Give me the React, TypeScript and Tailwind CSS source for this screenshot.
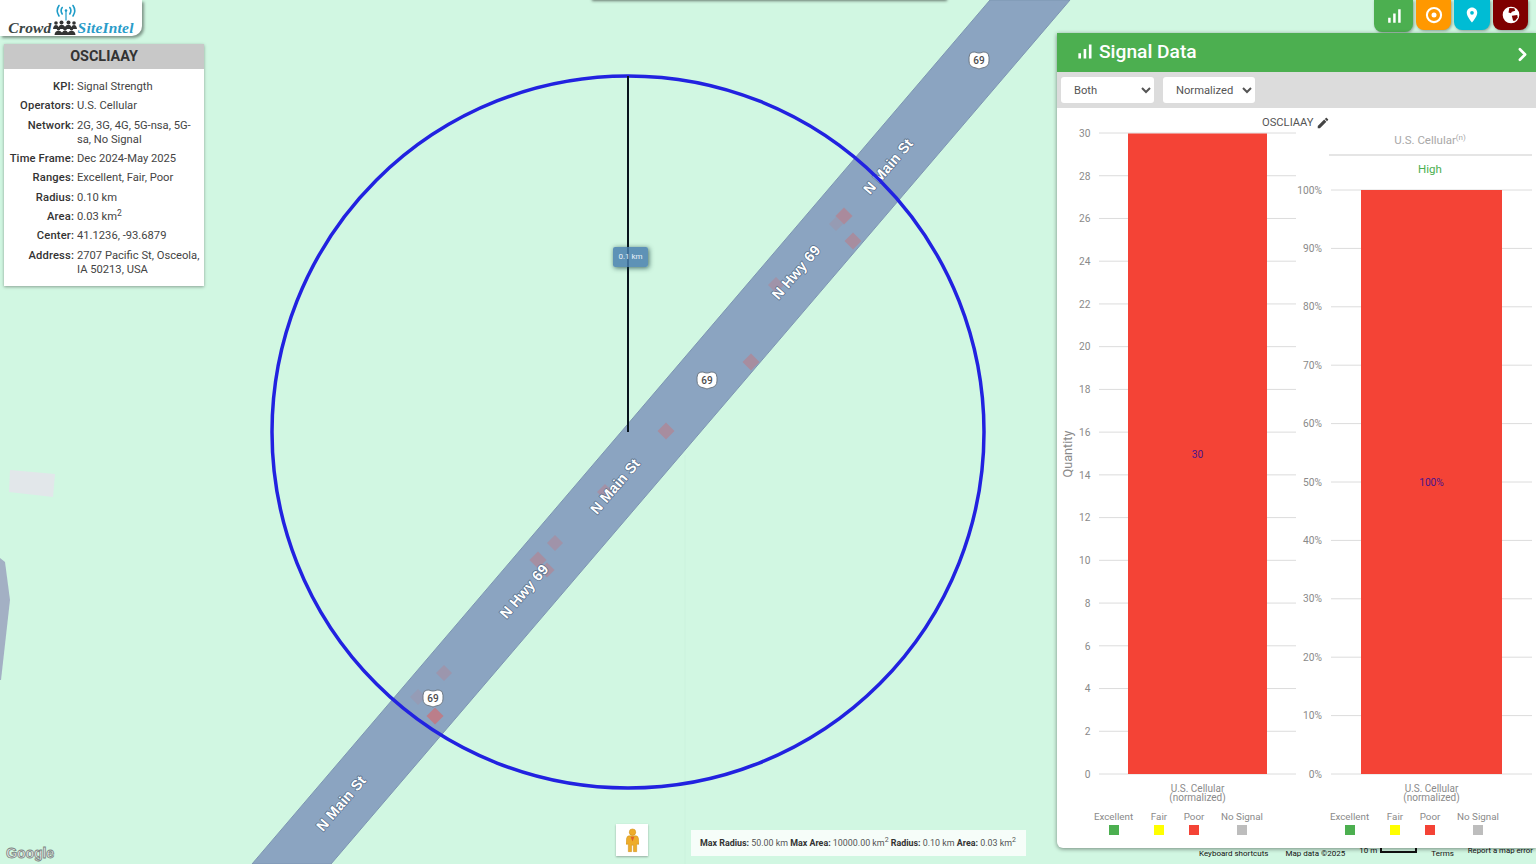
import React from "react";
import { ChevronRight } from "lucide-react";

const FONT = "font-['Roboto',sans-serif]";

const infoRows: [string, React.ReactNode][] = [
  ["KPI:", "Signal Strength"],
  ["Operators:", "U.S. Cellular"],
  ["Network:", "2G, 3G, 4G, 5G-nsa, 5G-sa, No Signal"],
  ["Time Frame:", "Dec 2024-May 2025"],
  ["Ranges:", "Excellent, Fair, Poor"],
  ["Radius:", "0.10 km"],
  ["Area:", <span key="a" className="inline-block h-[14px]">0.03 km<sup className="text-[8.5px]">2</sup></span>],
  ["Center:", "41.1236, -93.6879"],
  ["Address:", "2707 Pacific St, Osceola, IA 50213, USA"],
];

const diamonds: [number, number, number, number][] = [
  [666, 431, 8.5, 0.55],
  [751, 362, 8.5, 0.55],
  [776, 285, 8, 0.4],
  [844, 216, 8.5, 0.6],
  [836, 224, 7, 0.22],
  [853, 241, 8.5, 0.55],
  [605, 492, 8, 0.45],
  [555, 543, 8, 0.4],
  [538, 560, 8.5, 0.5],
  [547, 570, 7.5, 0.5],
  [444, 673, 8, 0.32],
  [418, 697, 8, 0.18],
  [435, 716, 8.5, 0.9],
];

const roadLabels: [string, number, number][] = [
  ["N Main St", 342, 804],
  ["N Hwy 69", 525, 592],
  ["N Main St", 616, 487],
  ["N Hwy 69", 797, 273],
  ["N Main St", 889, 167],
];

function Shield({ x, y }: { x: number; y: number }) {
  return (
    <g transform={`translate(${x} ${y})`}>
      <path
        d="M-9 -6.5 Q-6 -8.5 -4 -8 Q-2 -7 0 -7 Q2 -7 4 -8 Q6 -8.5 9 -6.5 Q10.5 -3 10 1 Q10 7 3 8 Q1 8.5 0 9 Q-1 8.5 -3 8 Q-10 7 -10 1 Q-10.5 -3 -9 -6.5 Z"
        fill="#fff"
        stroke="#6f7a86"
        strokeWidth="1"
      />
      <text x="0" y="3.5" textAnchor="middle" fontSize="10" fontWeight="500" fill="#4d4d4d">
        69
      </text>
    </g>
  );
}

function MapDrawing() {
  return (
    <svg className={`absolute inset-0 ${FONT}`} width="1536" height="864" viewBox="0 0 1536 864">
      <polygon points="990,0 1070,0 331,864 252,864" fill="#8ba4c1" stroke="#7d96b2" strokeWidth="1" />
      <polygon points="10,470 55,474 53,497 9,492" fill="#e2e7ea" />
      <polygon points="0,558 5,562 10,600 1,680 0,680" fill="#a3b0c4" />
      <line x1="685" y1="455" x2="685" y2="864" stroke="#cbf2dd" strokeWidth="1" />
      {diamonds.map(([x, y, r, o], i) => (
        <polygon
          key={i}
          points={`${x},${y - r} ${x + r},${y} ${x},${y + r} ${x - r},${y}`}
          fill="#c07a84"
          opacity={o}
        />
      ))}
      {roadLabels.map(([t, x, y], i) => (
        <text
          key={i}
          x={x}
          y={y}
          transform={`rotate(-49.5 ${x} ${y})`}
          textAnchor="middle"
          dominantBaseline="middle"
          fontFamily="Liberation Sans, sans-serif"
          fontSize="14.5"
          fontWeight="700"
          fill="#fff"
          stroke="#566d88"
          strokeWidth="1.4"
          paintOrder="stroke"
          letterSpacing="0.15"
        >
          {t}
        </text>
      ))}
      <Shield x={979} y={60} />
      <Shield x={707} y={380} />
      <Shield x={433} y={698} />
      <circle cx="628" cy="432" r="356" fill="none" stroke="#2222e0" strokeWidth="3.5" />
      <line x1="628" y1="76" x2="628" y2="432" stroke="#06131c" strokeWidth="2" />
    </svg>
  );
}

function CrowdIcon() {
  return (
    <svg width="26" height="15" viewBox="0 0 26 15" fill="#333" className="mb-[1px] shrink-0">
      <circle cx="4" cy="3" r="1.8" /><circle cx="9.5" cy="2.4" r="2" /><circle cx="16.5" cy="2.4" r="2" /><circle cx="22" cy="3" r="1.8" />
      <path d="M1 9 Q1.5 5 4 5 Q6 5 6.5 7 Q7.5 4.8 9.5 4.8 Q12 4.8 13 7 Q14 4.8 16.5 4.8 Q18.5 4.8 19.5 7 Q20 5 22 5 Q24.5 5 25 9 Z" />
      <circle cx="6.5" cy="8.8" r="1.8" /><circle cx="13" cy="8.4" r="2" /><circle cx="19.5" cy="8.8" r="1.8" />
      <path d="M2.5 15 Q3 10.8 6.5 10.8 Q9 10.8 10 12.5 Q11 10.6 13 10.6 Q15 10.6 16 12.5 Q17 10.8 19.5 10.8 Q23 10.8 23.5 15 Z" />
    </svg>
  );
}

function Logo() {
  return (
    <div className="absolute left-0 top-0 flex h-[36px] w-[142px] flex-col items-center rounded-br-[10px] bg-white shadow-[2px_2px_3px_rgba(0,0,0,0.4)]">
      <svg className="mr-[10px] mt-[4px]" width="24" height="17" viewBox="0 0 24 17" fill="none" stroke="#1e9cc8" strokeWidth="1.6" strokeLinecap="round">
        <path d="M5 1.5 Q1.5 6.5 5 12" />
        <path d="M8.2 3.5 Q6 6.5 8.2 10" />
        <path d="M19 1.5 Q22.5 6.5 19 12" />
        <path d="M15.8 3.5 Q18 6.5 15.8 10" />
        <circle cx="12" cy="6.5" r="1.3" fill="#1e9cc8" stroke="none" />
        <path d="M12 7 L12 16" strokeWidth="1.2" />
      </svg>
      <div className="-mt-[2px] flex items-end whitespace-nowrap font-['Liberation_Serif',serif] text-[15.5px] font-bold italic leading-[17px]">
        <span className="tracking-[0.2px] text-[#3a4444]">Crowd</span>
        <CrowdIcon />
        <span className="tracking-[0.2px] text-[#2a9cc9]">SiteIntel</span>
      </div>
    </div>
  );
}

function InfoPanel() {
  return (
    <div className={`absolute left-[4px] top-[44px] w-[200px] bg-white shadow-[0_1px_3px_rgba(0,0,0,0.35)] ${FONT}`}>
      <div className="flex h-[25px] items-center justify-center bg-[#c8c8c8] pt-[1px] text-[14.4px] font-bold text-[#333]">OSCLIAAY</div>
      <div className="grid grid-cols-[69px_1fr] gap-x-[3px] gap-y-[5px] pb-[9px] pl-[1px] pr-[2px] pt-[11px] text-[11.2px] leading-[14.3px] text-[#444]">
        {infoRows.map(([k, v], i) => (
          <React.Fragment key={i}>
            <div className="whitespace-nowrap text-right font-medium tracking-[0.15px] text-[#333]">{k}</div>
            <div>{v}</div>
          </React.Fragment>
        ))}
      </div>
    </div>
  );
}

function TopButton({ color, w, h, children }: { color: string; w: string; h: string; children: React.ReactNode }) {
  return (
    <div className={`flex items-center justify-center rounded-b-[8px] shadow-[1px_1px_3px_rgba(0,0,0,0.35)] ${color} ${w} ${h}`}>{children}</div>
  );
}

function TopButtons() {
  return (
    <div className="absolute right-[8px] top-0 flex items-start gap-[3px]">
      <TopButton color="bg-[#4caf50]" w="w-[39px]" h="h-[32px]">
        <svg width="20" height="20" viewBox="0 0 24 24" fill="#fff"><path d="M17 4h3v16h-3zM5 14h3v6H5zm6-5h3v11h-3z" /></svg>
      </TopButton>
      <TopButton color="bg-[#ff9800]" w="w-[35px]" h="h-[30px]">
        <svg width="20" height="20" viewBox="0 0 24 24" fill="none" stroke="#fff" strokeWidth="2.5"><circle cx="12" cy="12" r="8.5" /><circle cx="12" cy="12" r="3" fill="#fff" stroke="none" /></svg>
      </TopButton>
      <TopButton color="bg-[#00bcd4]" w="w-[36px]" h="h-[30px]">
        <svg width="18" height="18" viewBox="0 0 24 24" fill="#fff"><path d="M12 2C8.13 2 5 5.13 5 9c0 5.25 7 13 7 13s7-7.75 7-13c0-3.87-3.13-7-7-7zm0 9.5a2.5 2.5 0 0 1 0-5 2.5 2.5 0 0 1 0 5z" /></svg>
      </TopButton>
      <TopButton color="bg-[#7f0000]" w="w-[35px]" h="h-[30px]">
        <svg width="20" height="20" viewBox="0 0 24 24">
          <circle cx="12" cy="12" r="10" fill="#fff" />
          <path d="M10 3.5 L16 4 L17 7 L13 8 L12 10 L9 9 Z" fill="#7f0000" />
          <path d="M13 13 L19.5 12 L20 15 L17 19 L14.5 19 Z" fill="#7f0000" />
        </svg>
      </TopButton>
    </div>
  );
}

const legend: [string, string, number, number][] = [
  ["Excellent", "#4caf50", 0, 4.5],
  ["Fair", "#ffff00", 45, 50],
  ["Poor", "#f44336", 80, 85],
  ["No Signal", "#bdbdbd", 128, 133],
];

function Legend({ x }: { x: number }) {
  return (
    <>
      {legend.map(([t, c, sq, lbl]) => (
        <g key={t}>
          <text x={x + lbl} y={820} textAnchor="middle" fontSize="9.8" fill="#8a8a8a">{t}</text>
          <rect x={x + sq} y={825} width="10" height="10" fill={c} />
        </g>
      ))}
    </>
  );
}

function XLabel({ x }: { x: number }) {
  return (
    <>
      <text x={x} y={791.5} textAnchor="middle" fontSize="10" fill="#8a8a8a">U.S. Cellular</text>
      <text x={x} y={801} textAnchor="middle" fontSize="10" fill="#8a8a8a">(normalized)</text>
    </>
  );
}

function CountChart() {
  const ticks = Array.from({ length: 16 }, (_, i) => i * 2);
  const y = (v: number) => 774 - (v * 641) / 30;
  return (
    <svg width="240" height="740" viewBox="1057 108 240 740" className="block shrink-0">
      {ticks.map((t) => (
        <g key={t}>
          <line x1="1099" x2="1296" y1={y(t)} y2={y(t)} stroke="#dcdcdc" strokeWidth="1" />
          <text x="1090.5" y={y(t) + 3.8} textAnchor="end" fontSize="10.2" fill="#8a8a8a">{t}</text>
        </g>
      ))}
      <rect x="1128" y="133.5" width="139" height="640.5" fill="#f44336" />
      <text x="1197.5" y="458" textAnchor="middle" fontSize="10.2" fill="#4a148c">30</text>
      <text x="0" y="0" transform="translate(1071.5 454) rotate(-90)" textAnchor="middle" fontSize="12.7" fill="#8a8a8a">Quantity</text>
      <XLabel x={1197.5} />
      <Legend x={1109} />
    </svg>
  );
}

function PercentChart() {
  const ticks = Array.from({ length: 11 }, (_, i) => i * 10);
  const y = (v: number) => 774 - v * 5.84;
  return (
    <svg width="239" height="740" viewBox="1297 108 239 740" className="block shrink-0">
      <text x="1430" y="144" textAnchor="middle" fontSize="11.5" fill="#a8a8a8">
        U.S. Cellular<tspan dy="-4" fontSize="8">(n)</tspan>
      </text>
      <line x1="1329" x2="1532" y1="155" y2="155" stroke="#dcdcdc" strokeWidth="1.5" />
      <text x="1430" y="173" textAnchor="middle" fontSize="11.5" fill="#4caf50">High</text>
      {ticks.map((t) => (
        <g key={t}>
          <line x1="1331" x2="1532" y1={y(t)} y2={y(t)} stroke="#dcdcdc" strokeWidth="1" />
          <text x="1322" y={y(t) + 3.5} textAnchor="end" fontSize="10.2" fill="#8a8a8a">{t}%</text>
        </g>
      ))}
      <rect x="1361" y="190" width="141" height="584" fill="#f44336" />
      <text x="1431.5" y="486" textAnchor="middle" fontSize="10.2" fill="#4a148c">100%</text>
      <XLabel x={1431.5} />
      <Legend x={1345} />
    </svg>
  );
}

function SignalPanel() {
  return (
    <div className={`absolute left-[1057px] top-[33px] flex h-[815px] w-[479px] flex-col rounded-bl-[6px] bg-white shadow-[0_1px_4px_rgba(0,0,0,0.45)] ${FONT}`}>
      <div className="flex h-[39px] items-center justify-between bg-[#4caf50] pl-[17px] pr-[3px] text-white">
        <div className="-mt-[1px] flex items-center gap-[4px]">
          <svg width="21" height="21" viewBox="0 0 24 24" fill="#fff"><path d="M17 4h3v16h-3zM5 14h3v6H5zm6-5h3v11h-3z" /></svg>
          <span className="text-[19.2px] font-medium">Signal Data</span>
        </div>
        <ChevronRight size={21} strokeWidth={3} className="mt-[3px]" />
      </div>
      <div className="flex h-[36px] items-center gap-[9px] bg-[#dcdcdc] pl-[4px]">
        <select defaultValue="Both" className="h-[26px] w-[93px] rounded-[3px] bg-white pl-[9px] text-[11.2px] text-[#555]">
          <option>Both</option>
        </select>
        <select defaultValue="Normalized" className="h-[26px] w-[92px] rounded-[3px] bg-white pl-[9px] text-[11.2px] text-[#555]">
          <option>Normalized</option>
        </select>
      </div>
      <div className="relative flex flex-1">
        <CountChart />
        <PercentChart />
        <div className="absolute left-[205px] top-[8px] flex items-center gap-[2px] text-[11.2px] leading-[14px] text-[#555]">
          <span>OSCLIAAY</span>
          <svg width="14" height="14" viewBox="0 0 24 24" fill="#444"><path d="M3 17.25V21h3.75L17.81 9.94l-3.75-3.75L3 17.25zM20.71 7.04c.39-.39.39-1.02 0-1.41l-2.34-2.34c-.39-.39-1.02-.39-1.41 0l-1.83 1.83 3.75 3.75 1.83-1.83z" /></svg>
        </div>
      </div>
    </div>
  );
}

function Attribution() {
  return (
    <div className="absolute bottom-0 left-[1199px] flex h-[19px] items-start whitespace-nowrap text-[8px] leading-[10px] text-[#111]">
      <div className="mt-[4px]">Keyboard shortcuts</div>
      <div className="ml-[17px] mt-[4px]">Map data ©2025</div>
      <div className="ml-[14px] flex w-[58px] items-start justify-between">
        <span className="mt-[1px]">10 m</span>
        <div className="mt-[2px] h-[6px] w-[37px] border-x-2 border-b-2 border-[#111]" />
      </div>
      <div className="ml-[14px] mt-[4px]">Terms</div>
      <div className="ml-[14px] mt-[1px] text-[7.8px]">Report a map error</div>
    </div>
  );
}

export default function App() {
  return (
    <div className={`relative h-[864px] w-[1536px] overflow-hidden bg-[#d1f7e2] ${FONT}`}>
      <MapDrawing />
      <div className="absolute left-[592px] top-[-4px] h-[4px] w-[355px] bg-white shadow-[0_1px_3px_rgba(0,0,0,0.5)]" />
      <div className="absolute left-[613px] top-[247px] flex h-[20px] w-[35px] items-center justify-center rounded-[2px] bg-[#4a80ae]/85 text-[8px] text-[#e8f1f8] shadow-[1px_1px_5px_rgba(20,60,60,0.75)]">0.1 km</div>
      <div className="absolute left-[6px] top-[845px] font-['Liberation_Sans',sans-serif] text-[14.3px] font-bold leading-[17px] tracking-[-0.2px] text-[#e8e8e8] [-webkit-text-stroke:0.8px_#7a8480]">Google</div>
      <Logo />
      <InfoPanel />
      <TopButtons />
      <div className="absolute left-[616px] top-[824px] flex h-[32px] w-[32px] items-center justify-center bg-white shadow-[0_1px_2px_rgba(0,0,0,0.3)]">
        <svg width="13" height="25" viewBox="0 0 14 26" fill="#eeac2a" stroke="#c98a10" strokeWidth="0.5">
          <circle cx="7" cy="4" r="3.5" />
          <path d="M3 8 H11 Q13 8 13.5 11 L14 17 H11.5 V25 H8 V18 H6 V25 H2.5 V17 H0 L0.5 11 Q1 8 3 8 Z" />
          <path d="M5 9 L7 14 L9 9 Z" fill="#e0602a" stroke="none" />
        </svg>
      </div>
      <div className="absolute left-[691px] top-[830px] flex h-[26px] w-[335px] items-center whitespace-nowrap bg-white/80 pl-[9px] pt-[1px] text-[8.9px] text-[#555]">
        <span><b className="text-[#333]">Max Radius:</b> 50.00 km <b className="text-[#333]">Max Area:</b> 10000.00 km<sup className="text-[7px]">2</sup> <b className="text-[#333]">Radius:</b> 0.10 km <b className="text-[#333]">Area:</b> 0.03 km<sup className="text-[7px]">2</sup></span>
      </div>
      <Attribution />
      <SignalPanel />
    </div>
  );
}
